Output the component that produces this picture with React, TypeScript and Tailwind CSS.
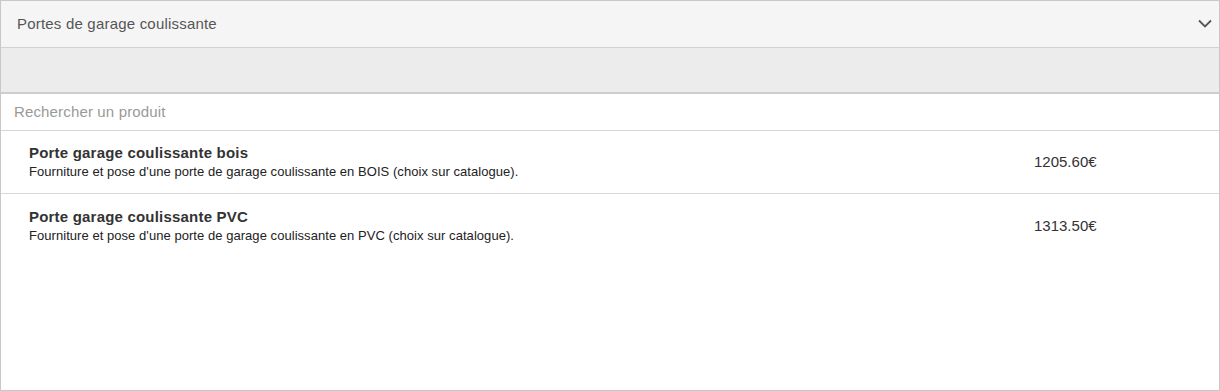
import React from "react";

const items = [
  {
    title: "Porte garage coulissante bois",
    desc: "Fourniture et pose d'une porte de garage coulissante en BOIS (choix sur catalogue).",
    price: "1205.60€",
  },
  {
    title: "Porte garage coulissante PVC",
    desc: "Fourniture et pose d'une porte de garage coulissante en PVC (choix sur catalogue).",
    price: "1313.50€",
  },
];

export default function App() {
  return (
    <div className="w-[1220px] h-[391px] bg-white border border-[#c8c8c8] flex flex-col font-['Liberation_Sans',Arial,sans-serif]">
      <div className="h-[47px] shrink-0 bg-[#f5f5f5] border-b border-[#d2d2d2] flex items-center justify-between pl-[16px] pr-[7px]">
        <span className="text-[15px] text-[#555] tracking-[0.2px]">Portes de garage coulissante</span>
        <svg width="14" height="9" viewBox="0 0 14 9" className="mt-[-2px]">
          <path d="M1 1.5 L7 7.5 L13 1.5" fill="none" stroke="#555" strokeWidth="1.8" />
        </svg>
      </div>
      <div className="h-[46px] shrink-0 bg-[#ececec] border-b-2 border-[#cdcdcd]" />
      <div className="h-[37px] shrink-0 border-b border-[#d6d6d6] flex items-center pl-[13px]">
        <span className="text-[15px] text-[#999] tracking-[0.15px]">Rechercher un produit</span>
      </div>
      {items.map((it, i) => (
        <div
          key={i}
          className={`h-[63px] shrink-0 flex items-center pl-[28px] ${i === 0 ? "border-b border-[#dadada]" : ""}`}
        >
          <div className="flex-1 flex flex-col mt-[-1px]">
            <span className="text-[15px] font-bold text-[#333] leading-[19px] tracking-[0.2px]">{it.title}</span>
            <span className="text-[13px] text-[#222] leading-[17px] mt-[1px] tracking-[0.05px]">{it.desc}</span>
          </div>
          <span className="w-[185px] text-[15px] text-[#333] mt-[1px]">{it.price}</span>
        </div>
      ))}
    </div>
  );
}
